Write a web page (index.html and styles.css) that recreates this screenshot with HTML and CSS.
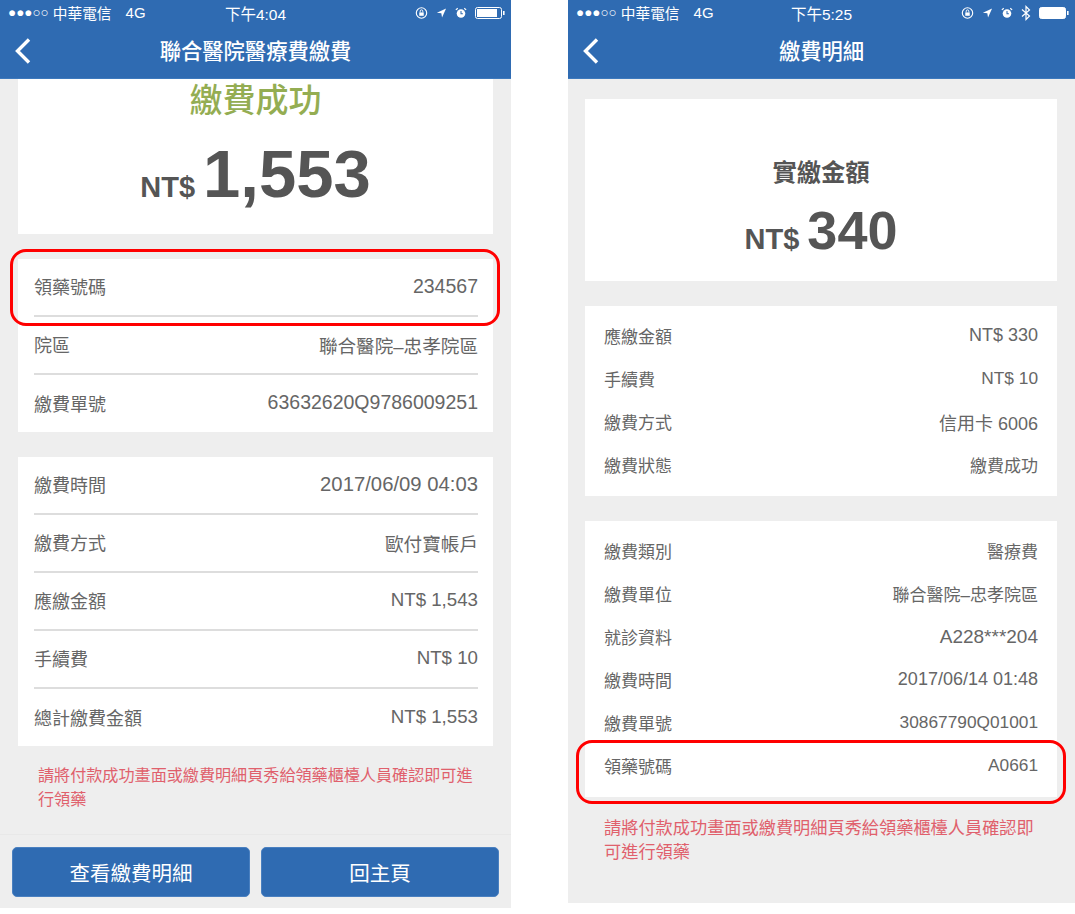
FILE: index.html
```html
<!DOCTYPE html>
<html lang="zh-Hant">
<head>
<meta charset="utf-8">
<title>繳費</title>
<link rel="stylesheet" href="styles.css">
</head>
<body>
<div class="shots">
  <section class="phone phone-a">
    <header class="top">
      <div class="status">
        <div class="st-left"><span class="sig">●●●○○</span><span>中華電信</span><span class="net">4G</span></div>
        <div class="st-time">下午4:04</div>
        <div class="st-right">
          <svg width="13" height="14" viewBox="0 0 14 14"><circle cx="7" cy="7" r="5.600" fill="none" stroke="#fff" stroke-width="1.200"/><rect x="4.600" y="6.400" width="4.800" height="3.600" fill="#fff"/><path d="M5.600 6.400V5a1.400 1.400 0 0 1 2.800 0v1.400" fill="none" stroke="#fff"/></svg>
          <svg width="11" height="12" viewBox="0 0 12 12"><path d="M11 1 1 5.600l4.800.6.8 4.800z" fill="#fff"/></svg>
          <svg width="12" height="14" viewBox="0 0 14 14"><circle cx="7" cy="7.600" r="5" fill="#fff"/><path d="M7 4.600v3.200h2.200" fill="none" stroke="#2f6bb2" stroke-width="1.200"/><path d="M1 3.400 3.200 1.400M13 3.400l-2.200-2" stroke="#fff" stroke-width="1.400"/></svg>
          <svg width="30" height="12" viewBox="0 0 30 12"><rect x=".5" y=".5" width="26" height="11" rx="2" fill="none" stroke="#fff"/><rect x="2" y="2" width="20" height="8" fill="#fff"/><rect x="28" y="4" width="1.600" height="4" fill="#fff"/></svg>
        </div>
      </div>
      <div class="nav">
        <svg class="back" width="18" height="28" viewBox="0 0 18 28"><path d="M15 2.500 3.500 14 15 25.500" fill="none" stroke="#fff" stroke-width="3.400"/></svg>
        <h1 class="title">聯合醫院醫療費繳費</h1>
      </div>
    </header>
    <main class="body-a">
      <div class="card hero-a">
        <div class="ok">繳費成功</div>
        <div class="amount"><span class="cur">NT$</span><span class="big-a">1,553</span></div>
      </div>
      <div class="card list-a">
        <div class="row-a"><span>領藥號碼</span><span class="num">234567</span></div>
        <div class="row-a"><span>院區</span><span class="wide">聯合醫院–忠孝院區</span></div>
        <div class="row-a"><span>繳費單號</span><span class="num">63632620Q9786009251</span></div>
      </div>
      <div class="card list-a">
        <div class="row-a"><span>繳費時間</span><span class="date">2017/06/09 04:03</span></div>
        <div class="row-a"><span>繳費方式</span><span class="wide">歐付寶帳戶</span></div>
        <div class="row-a"><span>應繳金額</span><span class="money">NT$ 1,543</span></div>
        <div class="row-a"><span>手續費</span><span class="money">NT$ 10</span></div>
        <div class="row-a"><span>總計繳費金額</span><span class="money">NT$ 1,553</span></div>
      </div>
      <p class="note note-a">請將付款成功畫面或繳費明細頁秀給領藥櫃檯人員確認即可進行領藥</p>
    </main>
    <footer class="actions">
      <button class="btn" type="button">查看繳費明細</button>
      <button class="btn" type="button">回主頁</button>
    </footer>
    <div class="ring ring-a"></div>
  </section>

  <section class="phone phone-b">
    <header class="top">
      <div class="status">
        <div class="st-left"><span class="sig">●●●○○</span><span>中華電信</span><span class="net">4G</span></div>
        <div class="st-time">下午5:25</div>
        <div class="st-right">
          <svg width="13" height="14" viewBox="0 0 14 14"><circle cx="7" cy="7" r="5.600" fill="none" stroke="#fff" stroke-width="1.200"/><rect x="4.600" y="6.400" width="4.800" height="3.600" fill="#fff"/><path d="M5.600 6.400V5a1.400 1.400 0 0 1 2.800 0v1.400" fill="none" stroke="#fff"/></svg>
          <svg width="11" height="12" viewBox="0 0 12 12"><path d="M11 1 1 5.600l4.800.6.8 4.800z" fill="#fff"/></svg>
          <svg width="12" height="14" viewBox="0 0 14 14"><circle cx="7" cy="7.600" r="5" fill="#fff"/><path d="M7 4.600v3.200h2.200" fill="none" stroke="#2f6bb2" stroke-width="1.200"/><path d="M1 3.400 3.200 1.400M13 3.400l-2.200-2" stroke="#fff" stroke-width="1.400"/></svg>
          <svg width="10" height="16" viewBox="0 0 10 16"><path d="M1 4.500 8.500 11 5 14.500V1.500L8.500 5 1 11.500" fill="none" stroke="#fff" stroke-width="1.200"/></svg>
          <svg width="30" height="12" viewBox="0 0 30 12"><rect x=".5" y=".5" width="26" height="11" rx="2" fill="#fff" stroke="#fff"/><rect x="28" y="4" width="1.600" height="4" fill="#fff"/></svg>
        </div>
      </div>
      <div class="nav">
        <svg class="back" width="18" height="28" viewBox="0 0 18 28"><path d="M15 2.500 3.500 14 15 25.500" fill="none" stroke="#fff" stroke-width="3.400"/></svg>
        <h1 class="title">繳費明細</h1>
      </div>
    </header>
    <main class="body-b">
      <div class="card hero-b">
        <div class="paid">實繳金額</div>
        <div class="amount"><span class="cur">NT$</span><span class="big-b">340</span></div>
      </div>
      <div class="card list-b">
        <div class="row-b"><span>應繳金額</span><span class="date">NT$ 330</span></div>
        <div class="row-b"><span>手續費</span><span class="num">NT$ 10</span></div>
        <div class="row-b"><span>繳費方式</span><span class="date">信用卡 6006</span></div>
        <div class="row-b"><span>繳費狀態</span><span>繳費成功</span></div>
      </div>
      <div class="card list-b">
        <div class="row-b"><span>繳費類別</span><span>醫療費</span></div>
        <div class="row-b"><span>繳費單位</span><span>聯合醫院–忠孝院區</span></div>
        <div class="row-b"><span>就診資料</span><span class="star">A228***204</span></div>
        <div class="row-b"><span>繳費時間</span><span class="date">2017/06/14 01:48</span></div>
        <div class="row-b"><span>繳費單號</span><span class="num">30867790Q01001</span></div>
        <div class="row-b"><span>領藥號碼</span><span class="num">A0661</span></div>
      </div>
      <p class="note note-b">請將付款成功畫面或繳費明細頁秀給領藥櫃檯人員確認即可進行領藥</p>
    </main>
    <div class="ring ring-b"></div>
  </section>
</div>
</body>
</html>
```
FILE: styles.css
```css
* { box-sizing: border-box; }
html, body { margin: 0; padding: 0; background: #fff; }
body { font-family: "Liberation Sans", "Noto Sans CJK TC", sans-serif; color: #666; }
.shots { display: flex; align-items: flex-start; gap: 57px; width: 1075px; }
.phone { position: relative; background: #eee; display: flex; flex-direction: column; }
.phone-a { width: 511px; height: 908px; }
.phone-b { width: 507px; height: 903px; }
.top { height: 79px; background: #2f6bb2; color: #fff; border-bottom: 1px solid #3d79bd; }
.status { display: flex; justify-content: space-between; align-items: center; height: 25px; padding: 0 6px 0 8px; font-size: 14.700px; position: relative; }
.st-left { display: flex; align-items: center; }
.sig { font-size: 13.500px; margin-right: 4px; }
.net { margin-left: 14px; font-size: 15px; }
.st-time { position: absolute; left: 0; right: 0; text-align: center; font-size: 15.500px; }
.st-right { display: flex; align-items: center; gap: 8px; }
.nav { position: relative; height: 53px; padding-top: 2px; display: flex; align-items: center; justify-content: center; }
.back { position: absolute; left: 14px; top: 12px; }
.title { margin: 0; font-size: 21.300px; font-weight: 500; line-height: 1; }

.body-a { flex: 1; padding: 0 18px; }
.card { background: #fff; }
.hero-a { height: 155px; display: flex; flex-direction: column; align-items: center; width: 475px; }
.ok { color: #94ad52; font-size: 33px; font-weight: 500; line-height: 44px; }
.amount { display: flex; align-items: baseline; justify-content: center; font-weight: 700; color: #555; }
.cur { font-size: 29px; }
.hero-a .amount { margin-top: 11px; line-height: 80px; }
.big-a { font-size: 67px; margin-left: 8px; }
.list-a { width: 475px; margin-top: 25px; padding: 0 15px 0 16px; }
.row-a { height: 58px; display: flex; justify-content: space-between; align-items: center; font-size: 18px; border-bottom: 2px solid #ddd; padding-bottom: 2px; }
.row-a:last-child { height: 57px; border-bottom: 0; }
.num { font-size: 19.500px; }
.date { font-size: 20.300px; }
.money { font-size: 18.700px; }
.wide { font-size: 18.600px; }
.row-b .num { font-size: 17.300px; }
.row-b .date { font-size: 18px; }
.star { font-size: 19px; }
.note { color: #e0606c; margin: 0; }
.note-a { font-size: 16.100px; line-height: 24px; padding: 17px 20px 0; }
.actions { height: 74px; border-top: 1px solid #e8e8e8; display: flex; gap: 11px; padding: 12px 12px 0; }
.btn { width: 238px; height: 50px; background: #2f6bb2; color: #fff; border: 1px solid #4a80c0; border-radius: 5px; font: inherit; font-size: 20.500px; }

.body-b { padding: 20px 18px 0 17px; flex: 1; }
.hero-b { height: 182px; display: flex; flex-direction: column; align-items: center; padding-top: 56px; }
.paid { font-size: 24.300px; font-weight: 700; color: #555; line-height: 36px; }
.hero-b .amount { margin-top: 8px; line-height: 62px; }
.big-b { font-size: 54px; margin-left: 8px; }
.list-b { margin-top: 25px; padding: 9px 19px; }
.row-b { height: 43px; display: flex; justify-content: space-between; align-items: center; font-size: 17px; padding-bottom: 2px; }
.note-b { font-size: 17.200px; line-height: 24px; padding: 19px 19px 0; }

.ring { position: absolute; border: 3px solid #f00; border-radius: 16px; pointer-events: none; }
.ring-a { left: 10px; top: 249px; width: 490px; height: 77px; }
.ring-b { left: 8px; top: 740px; width: 490px; height: 64px; }
```
